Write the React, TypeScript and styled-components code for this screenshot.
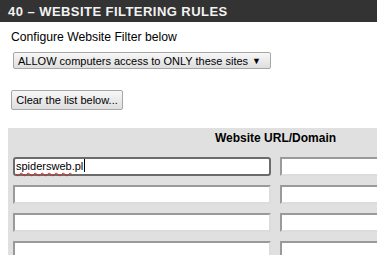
import styled, { createGlobalStyle } from 'styled-components';

const GlobalStyle = createGlobalStyle`
  html, body {
    margin: 0;
    padding: 0;
    overflow: hidden;
    background: #ffffff;
  }

  body {
    font-family: "Liberation Sans", Arial, sans-serif;
    color: #000000;
  }
`;

const PageDiv = styled.div`
  width: 377px;
  height: 255px;
  overflow: hidden;
`;

const TitleBar = styled.h2`
  margin: 0;
  height: 22px;
  padding-left: 8px;
  background-color: #333333;
  color: #f2f2f2;
  font-size: 13px;
  font-weight: bold;
  line-height: 23px;
  letter-spacing: 0.45px;
  text-transform: uppercase;
  white-space: nowrap;
`;

const BodyDiv = styled.div`
  display: flex;
  flex-direction: column;
  align-items: flex-start;
  padding: 7px 0 0 11px;
`;

const IntroP = styled.p`
  margin: 0;
  font-size: 12.2px;
  line-height: 16px;
  white-space: nowrap;
`;

const FilterSelect = styled.div`
  display: flex;
  align-items: center;
  justify-content: space-between;
  box-sizing: border-box;
  width: 258px;
  height: 17px;
  margin: 7px 0 0 2px;
  padding: 0 9px 0 4px;
  border: 1px solid #a6a6a6;
  border-radius: 2px;
  background: linear-gradient(#f7f7f7, #dedede);
  font-size: 11px;
  white-space: nowrap;
`;

const Arrow = styled.span`
  font-size: 9px;
`;

const ClearButton = styled.button`
  box-sizing: border-box;
  width: 112px;
  height: 20px;
  margin-top: 21px;
  padding: 0;
  border: 1px solid #a6a6a6;
  border-radius: 2px;
  background: linear-gradient(#f7f7f7, #dedede);
  font-family: "Liberation Sans", Arial, sans-serif;
  font-size: 11px;
  color: #000000;
`;

const RulesGrid = styled.div`
  display: grid;
  grid-template-columns: 258px 258px;
  column-gap: 9px;
  row-gap: 9px;
  margin: 18px 0 0 -3px;
  padding: 0 5px 10px;
  background-color: #e0e0e0;
`;

const GridHead = styled.div`
  grid-column: 1 / span 2;
  height: 20px;
  font-size: 12px;
  font-weight: bold;
  line-height: 20px;
  text-align: center;
`;

const UrlInput = styled.input`
  box-sizing: border-box;
  height: 19px;
  margin: 0;
  padding: 0 2px;
  border-width: 2px;
  border-style: solid;
  border-color: #9a9a9a #dcdcdc #dcdcdc #9a9a9a;
  background: #ffffff;
  font-family: "Liberation Sans", Arial, sans-serif;
  font-size: 11px;
`;

const FocusedField = styled.div`
  box-sizing: border-box;
  height: 19px;
  padding: 0 1px;
  border: 2px solid #6b6b6b;
  border-radius: 3px;
  background: #ffffff;
  font-size: 11px;
  line-height: 15px;
  white-space: nowrap;
`;

const Misspelt = styled.span`
  text-decoration: underline wavy #e02020;
  text-decoration-thickness: 1px;
  text-underline-offset: 2px;
`;

const Caret = styled.span`
  display: inline-block;
  width: 1px;
  height: 13px;
  margin-left: 1px;
  vertical-align: -2px;
  background: #000000;
`;

const App = () => {
  return (
    <PageDiv>
      <GlobalStyle />
      <TitleBar>40 – Website Filtering Rules</TitleBar>

      <BodyDiv>
        <IntroP>Configure Website Filter below</IntroP>
        <FilterSelect>
          <span>ALLOW computers access to ONLY these sites</span>
          <Arrow>▼</Arrow>
        </FilterSelect>

        <ClearButton type="button">Clear the list below...</ClearButton>

        <RulesGrid>
          <GridHead>Website URL/Domain</GridHead>
          <FocusedField>
            <Misspelt>spidersweb</Misspelt>.pl
            <Caret />
          </FocusedField>
          <UrlInput />
          <UrlInput />
          <UrlInput />
          <UrlInput />
          <UrlInput />
          <UrlInput />
          <UrlInput />
        </RulesGrid>
      </BodyDiv>
    </PageDiv>
  );
};

export default App;
